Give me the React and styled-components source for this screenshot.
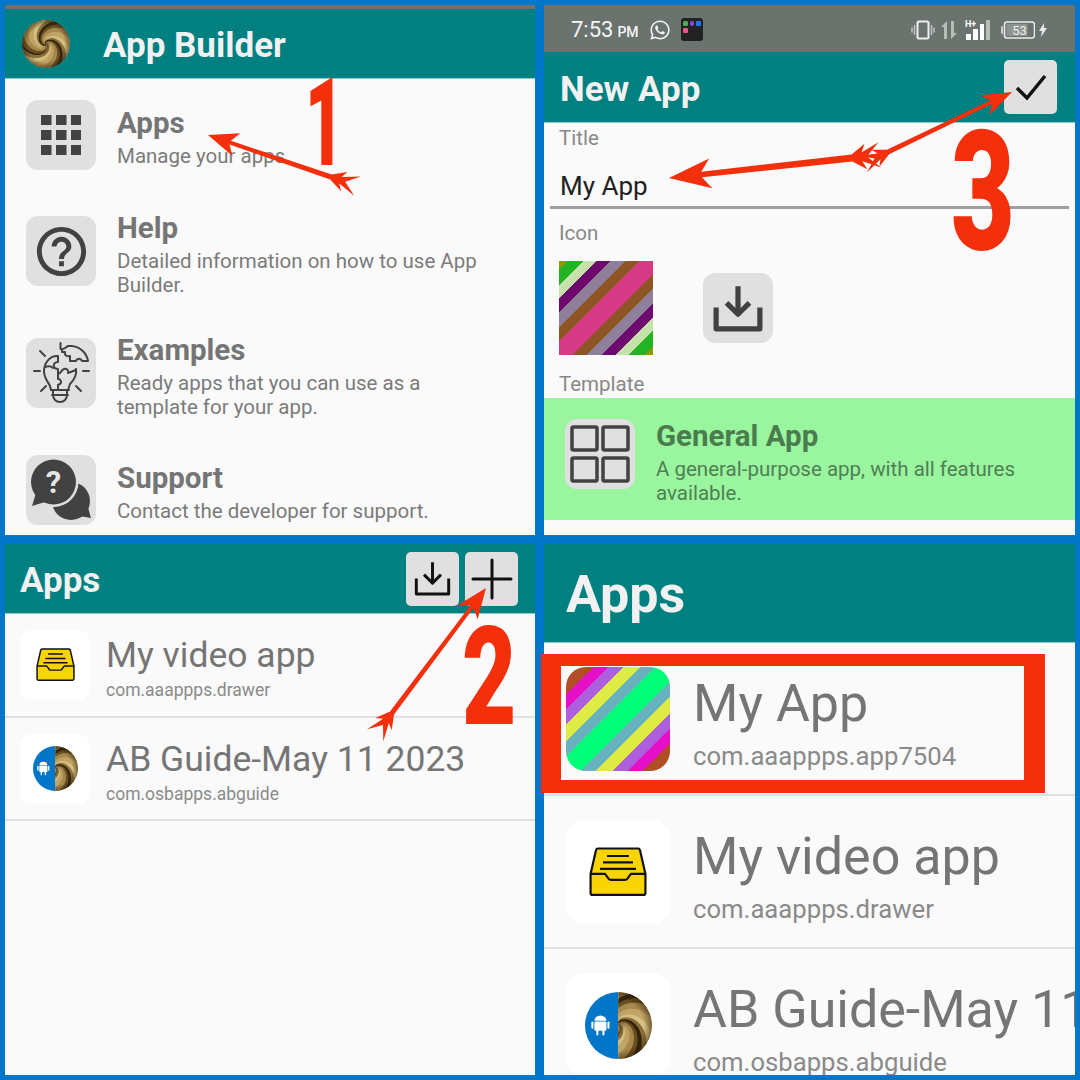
import React from "react";
import styled, { createGlobalStyle } from "styled-components";
import { MdHelpOutline } from "react-icons/md";
import { FaWhatsapp } from "react-icons/fa";

const Global = createGlobalStyle`
  html, body { margin: 0; padding: 0; width: 1080px; height: 1080px; overflow: hidden; background: #0277c9; }
  * { box-sizing: border-box; }
  #root { font-family: Roboto, "Noto Sans", sans-serif; }
`;

const Page = styled.div`
  position: relative;
  width: 1080px;
  height: 1080px;
  background: #0277c9;
  padding: 5px;
  display: grid;
  grid-template-columns: 530px 531px;
  grid-template-rows: 530px 531px;
  gap: 9px;
`;
const Panel = styled.section`
  background: #fafafa;
  overflow: hidden;
  display: flex;
  flex-direction: column;
`;
const TopStripe = styled.div`
  height: 4px;
  flex: none;
  background: #6b736e;
`;
const StatusBar = styled.div`
  height: 47px;
  flex: none;
  background: #6b736e;
  display: flex;
  align-items: center;
  padding: 2px 28px 0 27px;
  color: #f5f5f5;
`;
const Time = styled.span`
  font-size: 22px;
  line-height: 1;
`;
const Meridiem = styled.span`
  font-size: 14px;
  font-weight: 500;
  margin-left: 4px;
  margin-top: 4px;
`;
const StatusLeft = styled.div`
  display: flex;
  align-items: center;
`;
const StatusRight = styled.div`
  margin-left: auto;
  display: flex;
  align-items: center;
  gap: 5px;
`;
const BatteryText = styled.text`
  font-family: Roboto, sans-serif;
  font-size: 13px;
  fill: #eee;
`;
const SignalText = styled.text`
  font-family: Roboto, sans-serif;
  font-size: 9px;
  font-weight: 700;
  fill: #fff;
`;
const AppBar = styled.header`
  flex: none;
  height: ${(p) => p.$h}px;
  background: #008080;
  display: flex;
  align-items: center;
  padding: 0 ${(p) => p.$pr || 0}px 0 ${(p) => p.$pl}px;
  border-bottom: 1px solid #8fcfcb;
`;
const AppTitle = styled.h1`
  margin: 4px 0 0;
  font-size: ${(p) => p.$size || 35}px;
  font-weight: 700;
  line-height: 1;
  color: #f1f1f1;
`;
const LogoSlot = styled.div`
  width: 48px;
  height: 48px;
  margin-right: 33px;
  flex: none;
`;
const BarActions = styled.div`
  margin-left: auto;
  display: flex;
  gap: 6px;
`;
const BarButton = styled.div`
  width: 53px;
  height: 54px;
  border-radius: 5px;
  background: #e0e0e0;
  display: flex;
  align-items: center;
  justify-content: center;
  margin-top: ${(p) => p.$mt || 0}px;
`;
const MenuList = styled.div`
  display: flex;
  flex-direction: column;
`;
const MenuRow = styled.div`
  display: flex;
  align-items: center;
  padding: 15.5px 0 15.5px 16px;
  gap: 21px;
`;
const TemplateRow = styled(MenuRow)`
  align-items: flex-start;
  height: 122px;
  padding-top: 16px;
  background: #9af59f;
`;
const IconBox = styled.div`
  width: 70px;
  height: 70px;
  margin: 5px 0 5px 5px;
  flex: none;
  border-radius: 12px;
  background: #e0e0e0;
  display: flex;
  align-items: center;
  justify-content: center;
  color: #424242;
`;
const MenuText = styled.div`
  padding-top: 3px;
  width: 375px;
`;
const MenuTitle = styled.div`
  font-size: 29.5px;
  font-weight: 700;
  line-height: 38px;
  margin-bottom: 2px;
  color: ${(p) => p.$c || "#757575"};
`;
const MenuSub = styled.div`
  font-size: 20.5px;
  line-height: 24px;
  color: ${(p) => p.$c || "#7b7b7b"};
`;
const FieldLabel = styled.div`
  font-size: 20.5px;
  line-height: 28px;
  color: #888;
  padding-left: 15px;
  margin-top: ${(p) => p.$mt || 0}px;
`;
const TitleField = styled.div`
  height: 55px;
  margin: 2px 6px 0;
  padding: 14px 0 0 10px;
  border-bottom: 3px solid #9e9e9e;
  font-size: 26px;
  line-height: 36px;
  color: #212121;
`;
const IconPicker = styled.div`
  display: flex;
  align-items: center;
  gap: 50px;
  padding: 14px 0 0 15px;
`;
const Stripes = styled.div`
  width: ${(p) => p.$size}px;
  height: ${(p) => p.$size}px;
  flex: none;
  border-radius: ${(p) => p.$r || 0}px;
  background: linear-gradient(135deg, ${(p) => p.$stops});
`;
const PickButton = styled(IconBox)`
  margin: 0;
`;
const AppList = styled.div`
  display: flex;
  flex-direction: column;
`;
const AppRow = styled.div`
  flex: none;
  display: flex;
  align-items: flex-start;
  height: ${(p) => (p.$big ? 153 : 103.5)}px;
  padding: ${(p) => (p.$big ? "24px 0 0 22px" : "16px 0 0 15px")};
  gap: ${(p) => (p.$big ? 23 : 16)}px;
  border-bottom: 2px solid #e0e0e0;
`;
const AppIcon = styled.div`
  width: ${(p) => (p.$big ? 104 : 70)}px;
  height: ${(p) => (p.$big ? 104 : 70)}px;
  flex: none;
  border-radius: ${(p) => (p.$big ? 18 : 12)}px;
  background: #fff;
  display: flex;
  align-items: center;
  justify-content: center;
`;
const AppText = styled.div`
  white-space: nowrap;
  padding-top: ${(p) => (p.$big ? 5 : 3)}px;
`;
const AppName = styled.div`
  font-size: ${(p) => (p.$big ? 52 : 35.5)}px;
  line-height: ${(p) => (p.$big ? 64 : 44)}px;
  color: #757575;
`;
const AppId = styled.div`
  font-size: ${(p) => (p.$big ? 25.7 : 17.5)}px;
  line-height: ${(p) => (p.$big ? 32 : 22)}px;
  margin-top: ${(p) => (p.$big ? 4 : 2)}px;
  color: #8a8a8a;
`;
const Overlay = styled.svg`
  position: absolute;
  inset: 0;
  width: 1080px;
  height: 1080px;
  pointer-events: none;
`;
const Numeral = styled.div`
  position: absolute;
  left: ${(p) => p.$x}px;
  top: ${(p) => p.$y}px;
  font-family: Roboto, sans-serif;
  font-weight: 900;
  font-size: ${(p) => p.$fs}px;
  line-height: 1;
  color: #f42f0c;
  transform: scaleX(${(p) => p.$sx});
  transform-origin: 0 0;
`;
const Highlight = styled.div`
  position: absolute;
  left: 541px;
  top: 654px;
  width: 504px;
  height: 139px;
  border-style: solid;
  border-color: #f42f0c;
  border-width: 12px 21px 13px 20px;
`;

const arrowPoints = (tx, ty, jx, jy, hl, hw, sw) => {
  const dx = tx - jx;
  const dy = ty - jy;
  const len = Math.hypot(dx, dy);
  const ux = dx / len;
  const uy = dy / len;
  const nx = -uy;
  const ny = ux;
  const P = (bx, by, along, side) =>
    `${(bx + ux * along + nx * side).toFixed(1)},${(by + uy * along + ny * side).toFixed(1)}`;
  const s = hw * 0.85;
  return [
    P(tx, ty, 0, 0),
    P(tx, ty, -hl, hw),
    P(tx, ty, -hl * 0.78, sw * 0.8),
    P(jx, jy, 0, sw),
    P(jx, jy, -14, s),
    P(jx, jy, -10, s * 0.35),
    P(jx, jy, -28, s),
    P(jx, jy, -15, 0),
    P(jx, jy, -28, -s),
    P(jx, jy, -10, -s * 0.35),
    P(jx, jy, -14, -s),
    P(jx, jy, 0, -sw),
    P(tx, ty, -hl * 0.78, -sw * 0.8),
    P(tx, ty, -hl, -hw),
  ].join(" ");
};

const Swirl = ({ size, half, id }) => {
  const R = 50;
  const arms = [];
  const n = 90;
  for (let i = 0; i < n; i++) {
    const a0 = (i / n) * Math.PI * 2;
    let d = "";
    for (let t = 0; t <= 1.001; t += 0.05) {
      const r = 2 + t * (R - 2);
      const a = a0 + Math.sqrt(t) * 3;
      d += `${t === 0 ? "M" : "L"}${(50 + r * Math.cos(a)).toFixed(1)} ${(50 + r * Math.sin(a)).toFixed(1)}`;
    }
    const k = ((i / n) * 3) % 1;
    const c =
      k < 0.1 ? "#33240c" : k < 0.25 ? "#6a4f20" : k < 0.45 ? "#a88a4e" : k < 0.7 ? "#c4a665" : k < 0.85 ? "#d8c285" : "#8c6f3a";
    arms.push(<path key={i} d={d} stroke={c} strokeWidth="2.4" fill="none" />);
  }
  return (
    <svg width={size} height={size} viewBox="0 0 100 100">
      <defs>
        <clipPath id={id}>
          {half ? <rect x="50" y="0" width="50" height="100" /> : <rect width="100" height="100" />}
        </clipPath>
        <clipPath id={`${id}c`}>
          <circle cx="50" cy="50" r="50" />
        </clipPath>
        <radialGradient id={`${id}r`}>
          <stop offset="0" stopColor="#2a1a05" stopOpacity="0.55" />
          <stop offset="0.22" stopColor="#2a1a05" stopOpacity="0.05" />
          <stop offset="0.75" stopColor="#2a1a05" stopOpacity="0" />
          <stop offset="1" stopColor="#2a1a05" stopOpacity="0.5" />
        </radialGradient>
      </defs>
      <g clipPath={`url(#${id}c)`}>
        {half && <rect width="50" height="100" fill="#0277c9" />}
        <g clipPath={`url(#${id})`}>
          <circle cx="50" cy="50" r="50" fill="#a88c56" />
          {arms}
          <circle cx="50" cy="50" r="50" fill={`url(#${id}r)`} />
        </g>
        {half && (
          <g fill="#fff">
            <path d="M14 43a9 8 0 0 1 18 0z" />
            <rect x="14" y="44" width="18" height="14" rx="2" />
            <rect x="9.500" y="44" width="3" height="11" rx="1.500" />
            <rect x="33.500" y="44" width="3" height="11" rx="1.500" />
            <rect x="17" y="57" width="3" height="8" rx="1.500" />
            <rect x="26" y="57" width="3" height="8" rx="1.500" />
          </g>
        )}
      </g>
    </svg>
  );
};

const GridIcon = () => (
  <svg width="40" height="40" viewBox="0 0 40 40" fill="#424242">
    {[0, 15, 30].flatMap((y) =>
      [0, 15, 30].map((x) => <rect key={`${x}-${y}`} x={x} y={y} width="10.500" height="10" />)
    )}
  </svg>
);

const BulbIcon = () => (
  <svg width="70" height="70" viewBox="0 2 70 70" fill="none" stroke="#424242" strokeWidth="2" strokeLinecap="round" strokeLinejoin="round">
    <path d="M34.500 7v6M8 35h6M57 35h6M14 15l5 5M15 55l5-5M50 50l5 5" />
    <path d="M31 20C23 20 18 28 18 35c0 7 4 11 6 15l1 4" />
    <path d="M50 33c1 6-2 11-6 15l-2 6" />
    <path d="M32 20v6c-3 0-5 2-4 5 1 2 3 2 4 2v5c3 0 3-4 6-5 3-1 5 2 4 4l8-3" />
    <path d="M32 38v5c3 0 4 3 2 5l-2 1v5M19 31c3-1 6-1 8 1" />
    <path d="M42 10h4c9 1 15 8 16 15H56c-1-3-5-3-6 0h-6v-5c-3 1-6-1-5-4h-3v-3c3 0 4-2 6-3z" />
    <path d="M25 54h18M26 59h16" />
    <path d="M27 54v5c0 4 3 7 7 7s7-3 7-7v-5" />
  </svg>
);

const SupportIcon = () => (
  <svg width="70" height="70" viewBox="0 0 70 70">
    <circle cx="45" cy="46" r="19" fill="#424242" />
    <path d="M48 60l17 3-4-14z" fill="#424242" />
    <circle cx="27.500" cy="27" r="25" fill="#e0e0e0" />
    <circle cx="27.500" cy="27" r="22.500" fill="#424242" />
    <path d="M6 51l13-4-9-9z" fill="#424242" />
    <text x="27.500" y="38" textAnchor="middle" fontFamily="Roboto, sans-serif" fontWeight="700" fontSize="31" fill="#e6e6e6">?</text>
  </svg>
);

const DownloadIcon = ({ size, w, c }) => (
  <svg width={size} height={size} viewBox="0 0 48 48" fill="none" stroke={c} strokeWidth={w} strokeLinejoin="round">
    <path d="M24 3v27M13 19l11 11 11-11" />
    <path d="M3 26v18h42V26" strokeLinecap="square" />
  </svg>
);

const TemplateIcon = () => (
  <svg width="62" height="60" viewBox="0 0 62 60" fill="none" stroke="#424242" strokeWidth="3.500">
    <rect x="3" y="3" width="25" height="23" rx="1.500" />
    <rect x="34" y="3" width="25" height="23" rx="1.500" />
    <rect x="3" y="34" width="25" height="23" rx="1.500" />
    <rect x="34" y="34" width="25" height="23" rx="1.500" />
  </svg>
);

const DrawerIcon = ({ size }) => (
  <svg width={size} height={size * 0.86} viewBox="0 0 58 50" strokeLinejoin="round" fill="none" stroke="#111" strokeWidth="2.200">
    <path
      d="M9 1.500h40a2 2 0 0 1 2 1.500L56.500 27v19a2 2 0 0 1-2 2H3.500a2 2 0 0 1-2-2V27L7 3a2 2 0 0 1 2-1.500z"
      fill="#f8d400"
    />
    <path d="M18 9h22M14 15.500h30M11 22h36" />
    <path d="M2 27h14l3 4a3 3 0 0 0 3 2h14a3 3 0 0 0 3-2l3-4h14" />
  </svg>
);

const FolderIcon = () => (
  <svg width="22" height="23" viewBox="0 0 22 23" style={{ marginLeft: 10 }}>
    <rect width="22" height="23" rx="3" fill="#222" />
    <rect x="2" y="3" width="5" height="5" rx="1.500" fill="#4caf50" />
    <rect x="9" y="3" width="4" height="5" rx="2" fill="#8e44e8" />
    <rect x="15" y="3" width="5" height="5" rx="1" fill="#1877f2" />
    <rect x="2" y="10" width="5" height="5" rx="1" fill="#e8558a" />
  </svg>
);

const StatusIcons = () => (
  <>
    <svg width="24" height="20" viewBox="0 0 24 20" fill="none" stroke="#f0f0f0">
      <rect x="6.500" y="1.500" width="11" height="17" rx="1.500" strokeWidth="2" />
      <path d="M3.500 5v10M20.500 5v10M1 7.500v5M23 7.500v5" strokeWidth="1.500" opacity=".65" />
    </svg>
    <svg width="18" height="20" viewBox="0 0 18 20" fill="#b9bdba">
      <path d="M7 1v18H4V7H1zM11 1h3v12h3l-6 6z" />
    </svg>
    <svg width="26" height="22" viewBox="0 0 26 22" style={{ marginLeft: 2 }}>
      <SignalText x="0" y="8">H+</SignalText>
      <rect x="1" y="15" width="5" height="6" fill="#fff" />
      <rect x="8" y="10" width="5" height="11" fill="#fff" />
      <rect x="15" y="5" width="4" height="16" fill="#fff" />
      <rect x="21" y="1" width="4" height="20" fill="#b9bdba" />
    </svg>
    <svg width="34" height="18" viewBox="0 0 34 18" style={{ marginLeft: 5 }}>
      <rect x="3.500" y="1" width="30" height="16" rx="2.500" fill="none" stroke="#eee" strokeWidth="1.500" />
      <rect x="5.500" y="3" width="21" height="12" fill="#8e9490" />
      <rect x="0" y="5" width="2" height="8" rx="1" fill="#ccc" />
      <BatteryText x="18.500" y="14" textAnchor="middle">53</BatteryText>
    </svg>
    <svg width="8" height="14" viewBox="0 0 8 14" fill="#e8e8e8" style={{ marginLeft: -1 }}>
      <path d="M5 0L0 8h3l-1 6 6-9H5z" />
    </svg>
  </>
);

const stripesA =
  "#8f9a00 0 4.6%, #22b422 0 12.8%, #c5e2ab 0 20.1%, #6e0a6e 0 27.5%, #8e7f9b 0 35.2%, #8d5524 0 42.7%, #d63a84 0 57.3%, #8d5524 0 64.8%, #8e7f9b 0 72.5%, #6e0a6e 0 79.9%, #c5e2ab 0 87.2%, #22b422 0 95.4%, #8f9a00 0";
const stripesB =
  "#b24d26 0 13%, #e60fc8 0 20.4%, #ad60dd 0 27.6%, #dfea45 0 35.6%, #68b2bf 0 42.8%, #00ff78 0 57.2%, #68b2bf 0 64.4%, #dfea45 0 72.4%, #ad60dd 0 79.6%, #e60fc8 0 87%, #b24d26 0";

const Item = ({ icon, title, children }) => (
  <MenuRow>
    <IconBox>{icon}</IconBox>
    <MenuText>
      <MenuTitle>{title}</MenuTitle>
      <MenuSub>{children}</MenuSub>
    </MenuText>
  </MenuRow>
);

const Entry = ({ big, icon, name, id }) => (
  <AppRow $big={big}>
    {icon}
    <AppText $big={big}>
      <AppName $big={big}>{name}</AppName>
      <AppId $big={big}>{id}</AppId>
    </AppText>
  </AppRow>
);

export default function App() {
  return (
    <Page>
      <Global />
      <Panel>
        <TopStripe />
        <AppBar $h={70} $pl={17}>
          <LogoSlot>
            <Swirl size={48} id="logoA" />
          </LogoSlot>
          <AppTitle>App Builder</AppTitle>
        </AppBar>
        <MenuList>
          <Item icon={<GridIcon />} title="Apps">Manage your apps</Item>
          <Item icon={<MdHelpOutline size={59} color="#424242" />} title="Help">
            Detailed information on how to use App Builder.
          </Item>
          <Item icon={<BulbIcon />} title="Examples">
            Ready apps that you can use as a template for your app.
          </Item>
          <Item icon={<SupportIcon />} title="Support">Contact the developer for support.</Item>
        </MenuList>
      </Panel>

      <Panel>
        <StatusBar>
          <StatusLeft>
            <Time>7:53</Time>
            <Meridiem>PM</Meridiem>
            <FaWhatsapp size={22} color="#f2f2f2" style={{ marginLeft: 10 }} />
            <FolderIcon />
          </StatusLeft>
          <StatusRight>
            <StatusIcons />
          </StatusRight>
        </StatusBar>
        <AppBar $h={71} $pl={16} $pr={18}>
          <AppTitle>New App</AppTitle>
          <BarActions>
            <BarButton $mt={-1}>
              <svg width="34" height="28" viewBox="0 0 34 28" fill="none" stroke="#111" strokeWidth="3.500">
                <path d="M3 15l10 10L31 3" />
              </svg>
            </BarButton>
          </BarActions>
        </AppBar>
        <FieldLabel $mt={1}>Title</FieldLabel>
        <TitleField>My App</TitleField>
        <FieldLabel $mt={10}>Icon</FieldLabel>
        <IconPicker>
          <Stripes $size={94} $stops={stripesA} />
          <PickButton>
            <DownloadIcon size={50} w={5} c="#424242" />
          </PickButton>
        </IconPicker>
        <FieldLabel $mt={15}>Template</FieldLabel>
        <TemplateRow>
          <IconBox>
            <TemplateIcon />
          </IconBox>
          <MenuText>
            <MenuTitle $c="#4a7c4e">General App</MenuTitle>
            <MenuSub $c="#507f54">A general-purpose app, with all features available.</MenuSub>
          </MenuText>
        </TemplateRow>
      </Panel>

      <Panel>
        <AppBar $h={70} $pl={15} $pr={17}>
          <AppTitle>Apps</AppTitle>
          <BarActions>
            <BarButton>
              <DownloadIcon size={37} w={3.800} c="#111" />
            </BarButton>
            <BarButton>
              <svg width="42" height="42" viewBox="0 0 42 42" stroke="#111" strokeWidth="3" strokeLinecap="round">
                <path d="M21 2v38M2 21h38" />
              </svg>
            </BarButton>
          </BarActions>
        </AppBar>
        <AppList>
          <Entry
            icon={<AppIcon><DrawerIcon size={39} /></AppIcon>}
            name="My video app"
            id="com.aaappps.drawer"
          />
          <Entry
            icon={<AppIcon><Swirl size={45} half id="logoB" /></AppIcon>}
            name="AB Guide-May 11 2023"
            id="com.osbapps.abguide"
          />
        </AppList>
      </Panel>

      <Panel>
        <AppBar $h={99} $pl={22}>
          <AppTitle $size={52}>Apps</AppTitle>
        </AppBar>
        <AppList>
          <Entry
            big
            icon={<Stripes $size={104} $r={20} $stops={stripesB} />}
            name="My App"
            id="com.aaappps.app7504"
          />
          <Entry
            big
            icon={<AppIcon $big><DrawerIcon size={58} /></AppIcon>}
            name="My video app"
            id="com.aaappps.drawer"
          />
          <Entry
            big
            icon={<AppIcon $big><Swirl size={67} half id="logoC" /></AppIcon>}
            name="AB Guide-May 11 2023"
            id="com.osbapps.abguide"
          />
        </AppList>
      </Panel>

      <Highlight />
      <Numeral $x={305} $y={63} $fs={122} $sx={0.55}>1</Numeral>
      <Numeral $x={462} $y={608} $fs={138} $sx={0.68}>2</Numeral>
      <Numeral $x={951} $y={109} $fs={167} $sx={0.66}>3</Numeral>
      <Overlay viewBox="0 0 1080 1080">
        <g fill="#f42f0c">
          <polygon points={arrowPoints(208, 135, 331, 177, 30, 12, 2.500)} />
          <polygon points={arrowPoints(486, 588, 392, 713, 30, 12, 2.500)} />
          <polygon points={arrowPoints(1012, 92, 888, 152, 30, 11, 2.500)} />
          <polygon points={arrowPoints(669, 178, 852, 158, 42, 15, 3.500)} />
        </g>
      </Overlay>
    </Page>
  );
}
